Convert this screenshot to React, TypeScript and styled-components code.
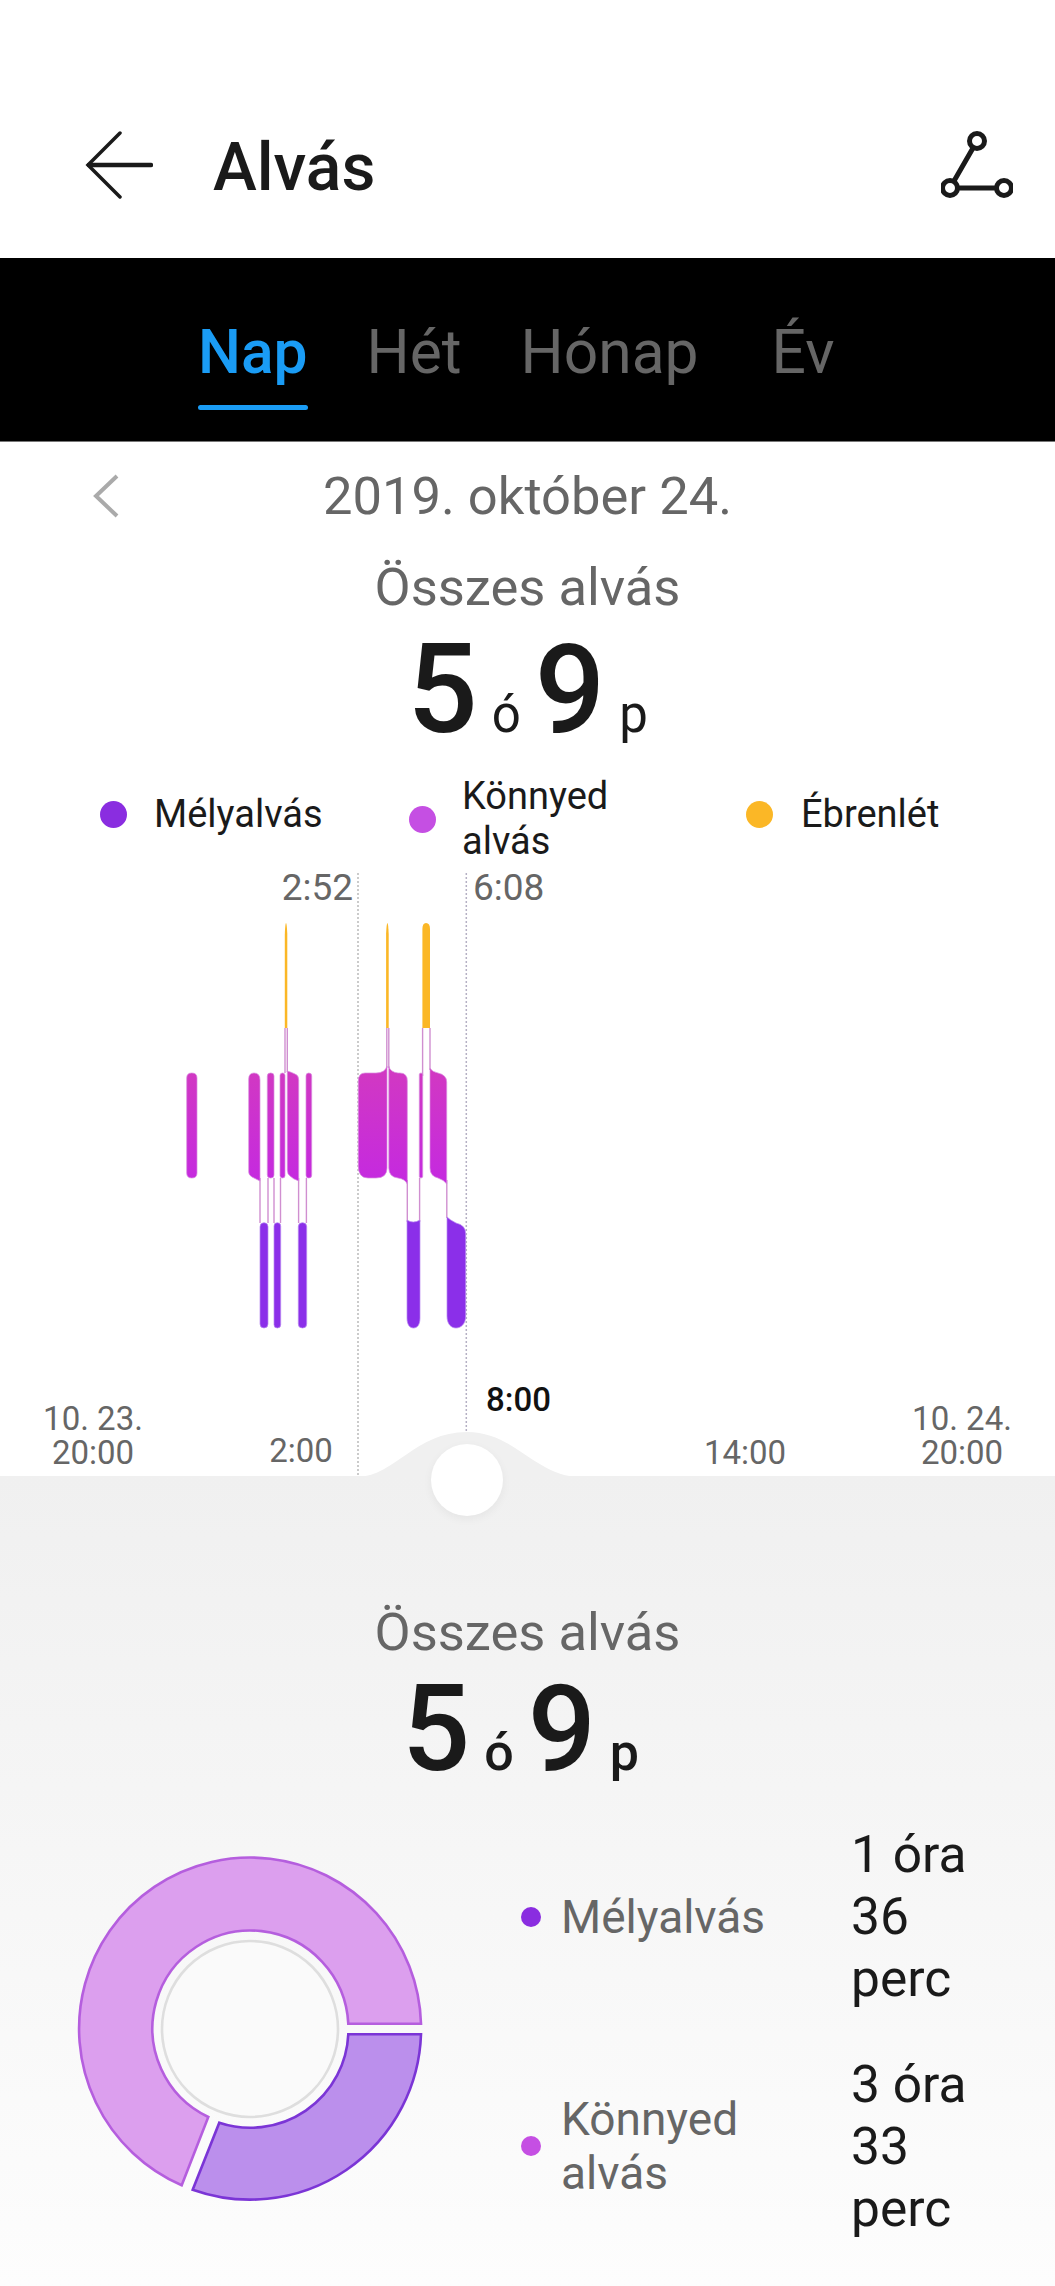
import React from "react";
import styled, { createGlobalStyle } from "styled-components";

const Global = createGlobalStyle`
  html, body { margin: 0; padding: 0; background: #fff; }
  body { font-family: Roboto, "Liberation Sans", sans-serif; }
`;

const Page = styled.div`
  width: 1055px;
  height: 2286px;
  overflow: hidden;
  display: flex;
  flex-direction: column;
  background: #fff;
`;

const Header = styled.header`
  height: 258px;
  box-sizing: border-box;
  padding: 72px 42px 0 85px;
  display: flex;
  align-items: center;
  flex: none;
`;

const Title = styled.h1`
  margin: 6px 0 0 60px;
  flex: 1;
  font-size: 66px;
  font-weight: 500;
  color: #1a1a1a;
  line-height: 1;
`;

const IconBox = styled.svg`
  display: block;
  flex: none;
`;

const TabBar = styled.nav`
  height: 184px;
  flex: none;
  box-sizing: border-box;
  background: #000;
  border-bottom: 1px solid #777;
  padding: 0 0 0 198px;
  display: flex;
  align-items: stretch;
  gap: 59px;
`;

const Tab = styled.div<{ $active?: boolean; $extra?: number }>`
  position: relative;
  margin-left: ${(p) => p.$extra ?? 0}px;
  padding-top: 60px;
  font-size: 60.5px;
  line-height: 70px;
  font-weight: ${(p) => (p.$active ? 500 : 400)};
  color: ${(p) => (p.$active ? "#1a9cf5" : "#666")};
  &::after {
    content: "";
    display: ${(p) => (p.$active ? "block" : "none")};
    position: absolute;
    left: 0;
    right: 0;
    top: 147px;
    height: 5px;
    border-radius: 3px;
    background: #1a9cf5;
  }
`;

const DateRow = styled.div`
  height: 76px;
  margin-top: 16px;
  flex: none;
  display: grid;
  grid-template-columns: 120px 1fr 120px;
  align-items: center;
`;

const DateLabel = styled.div`
  text-align: center;
  font-size: 52.5px;
  line-height: 76px;
  color: #666;
`;

const Heading = styled.div<{ $top: number }>`
  text-align: center;
  font-size: 52.5px;
  line-height: 60px;
  color: #666;
  margin-top: ${(p) => p.$top}px;
  flex: none;
`;

const BigRow = styled.div<{ $gap: number; $top: number; $height: number; $shift?: number }>`
  display: flex;
  justify-content: center;
  align-items: baseline;
  gap: ${(p) => p.$gap}px;
  margin-top: ${(p) => p.$top}px;
  height: ${(p) => p.$height}px;
  padding-right: ${(p) => p.$shift ?? 0}px;
  color: #1a1a1a;
  flex: none;
`;

const BigDigit = styled.span<{ $size: number }>`
  font-size: ${(p) => p.$size}px;
  line-height: 1;
  font-weight: 500;
`;

const Unit = styled.span<{ $strong?: boolean }>`
  font-size: ${(p) => (p.$strong ? 52 : 51)}px;
  line-height: 1;
  font-weight: ${(p) => (p.$strong ? 500 : 400)};
`;

const Legend = styled.div`
  display: grid;
  grid-template-columns: 309px 337px 1fr;
  padding-left: 100px;
  margin-top: 15px;
  height: 96px;
  align-items: center;
  flex: none;
`;

const LegendItem = styled.div<{ $gap: number; $lift?: number }>`
  display: flex;
  align-items: center;
  gap: ${(p) => p.$gap}px;
  margin-bottom: ${(p) => p.$lift ?? 0}px;
  font-size: 38px;
  line-height: 45px;
  color: #1a1a1a;
`;

const Dot = styled.span<{ $color: string; $size: number }>`
  width: ${(p) => p.$size}px;
  height: ${(p) => p.$size}px;
  border-radius: 50%;
  background: ${(p) => p.$color};
  flex: none;
`;

const Chart = styled.div`
  position: relative;
  height: 606px;
  margin-top: 3px;
  flex: none;
`;

const ChartSvg = styled.svg`
  position: absolute;
  left: 0;
  top: 0;
  display: block;
`;

const ChartLabel = styled.div<{ $x: number; $y: number; $strong?: boolean; $align?: string; $size?: number }>`
  position: absolute;
  left: ${(p) => p.$x}px;
  top: ${(p) => p.$y}px;
  transform: translateX(${(p) => (p.$align === "center" ? "-50%" : p.$align === "right" ? "-100%" : "0")});
  font-size: ${(p) => p.$size ?? 33}px;
  line-height: 34px;
  text-align: center;
  white-space: nowrap;
  font-weight: ${(p) => (p.$strong ? 500 : 400)};
  color: ${(p) => (p.$strong ? "#111" : "#666")};
`;

const Knob = styled.div`
  position: absolute;
  left: 431px;
  top: 574px;
  width: 72px;
  height: 72px;
  border-radius: 50%;
  background: #fff;
  box-shadow: 0 3px 10px rgba(0, 0, 0, 0.05);
`;

const Panel = styled.section`
  flex: 1;
  display: flex;
  flex-direction: column;
  background: linear-gradient(#f0f0f0, #fdfdfd);
`;

const DonutRow = styled.div`
  display: grid;
  grid-template-columns: 521px 330px 1fr;
  margin-top: 5px;
`;

const DonutSlot = styled.div`
  padding: 54px 0 0 77px;
`;

const BreakName = styled.div`
  display: flex;
  align-items: center;
  gap: 20px;
  font-size: 46px;
  line-height: 54px;
  color: #666;
`;

const BreakValue = styled.div`
  font-size: 51.5px;
  line-height: 62px;
  color: #1a1a1a;
`;

const BreakCell = styled.div<{ $h: number }>`
  height: ${(p) => p.$h}px;
  display: flex;
  align-items: center;
`;

type Bar = [number, number, number, number, number];
const r = (x1: number, x2: number, y1: number, y2: number, rad: number) => {
  const R = Math.min(rad, (x2 - x1) / 2);
  return `M${x1} ${y1 + R}Q${x1} ${y1} ${x1 + R} ${y1}L${x2 - R} ${y1}Q${x2} ${y1} ${x2} ${y1 + R}L${x2} ${y2 - R}Q${x2} ${y2} ${x2 - R} ${y2}L${x1 + R} ${y2}Q${x1} ${y2} ${x1} ${y2 - R}Z`;
};

const lightBars: Bar[] = [
  [186.7, 197, 1073, 1178, 5],
  [267.3, 274, 1073, 1178, 3],
  [280, 285, 1073, 1178, 3],
  [306, 311.7, 1073, 1178, 3],
  [419.3, 422.7, 1073, 1178, 2],
];

const lightPaths = [
  "M248.7 1079Q248.7 1073 254 1073Q260 1073 260 1080L260 1181Q256 1179 252 1177Q248.7 1175 248.7 1172Z",
  "M287.3 1071Q291 1072 295 1074Q298.7 1075 298.7 1080L298.7 1181Q293 1179 290 1176Q287.3 1174 287.3 1170Z",
  "M358.3 1081Q358.3 1073 365 1073L376 1073Q385 1073 387 1066L387 1168Q387 1178 376 1178L368 1178Q358.3 1178 358.3 1166Z",
  "M388.8 1066Q390 1072 398 1073L400 1073Q407.3 1073 407.3 1081L407.3 1184Q405 1179 398 1178Q388.8 1177 388.8 1168Z",
  "M430 1068Q432 1072 438 1073Q446.7 1075 446.7 1082L446.7 1184Q444 1180 438 1178Q430 1176 430 1168Z",
];

const deepBars: Bar[] = [
  [260, 268, 1222.7, 1328, 4],
  [274, 280.7, 1222.7, 1328, 3.3],
  [298.3, 306.7, 1222.7, 1328, 4],
];

const deepPaths = [
  "M407 1220Q413 1224 420 1220L420 1318C420 1325 417 1328 413.5 1328C410 1328 407 1325 407 1318Z",
  "M447 1217Q450 1220 456 1223Q465.7 1225 465.7 1234L465.7 1316C465.7 1324 461 1328 456 1328C451 1328 447 1324 447 1316Z",
];

const yellowPaths = [
  "M284.8 1028L284.8 934Q285.3 923 286 923Q286.8 923 287.3 934L287.3 1028Z",
  "M386.1 1028L386.1 934Q386.6 923 387.4 923Q388.2 923 388.7 934L388.7 1028Z",
  "M422.4 1028L422.4 929Q422.4 923 426 923Q430 923 430 929L430 1028Z",
];

const connectors: [number, number, number][] = [
  [285, 1028, 1073],
  [287.3, 1028, 1072],
  [386.8, 1028, 1068],
  [388.8, 1028, 1068],
  [422.6, 1028, 1076],
  [430, 1028, 1070],
  [260, 1178, 1223],
  [268, 1178, 1223],
  [274, 1178, 1223],
  [280.5, 1178, 1223],
  [298.6, 1178, 1223],
  [306.4, 1178, 1223],
  [407.3, 1180, 1222],
  [419.6, 1178, 1222],
  [446.8, 1180, 1218],
];

const BackIcon = () => (
  <IconBox width="68" height="68" viewBox="0 0 68 68" fill="none" stroke="#1a1a1a" strokeLinecap="round">
    <path d="M35 2 3 34l32 32" strokeWidth="3.5" />
    <path d="M4 34h62" strokeWidth="4.5" />
  </IconBox>
);

const RouteIcon = () => (
  <IconBox width="72" height="68" viewBox="0 0 72 68" fill="none" stroke="#1a1a1a" strokeWidth="5">
    <circle cx="36" cy="10" r="7.5" />
    <circle cx="9" cy="57" r="7.5" />
    <circle cx="63" cy="57" r="7.5" />
    <path d="M32 17 13 50M17 57h38" />
  </IconBox>
);

const ChevronSvg = styled(IconBox)`
  margin-left: 92px;
`;

const Chevron = () => (
  <ChevronSvg width="28" height="44" viewBox="0 0 28 44" fill="none" stroke="#aaa" strokeWidth="4">
    <path d="M25 2 4 22l21 20" />
  </ChevronSvg>
);

const SleepChart = () => (
  <Chart>
    <ChartSvg width="1055" height="606" viewBox="0 870 1055 606" overflow="visible">
      <defs>
        <linearGradient id="lightGrad" gradientUnits="userSpaceOnUse" x1="0" y1="1073" x2="0" y2="1180">
          <stop offset="0" stopColor="#d138c3" />
          <stop offset="1" stopColor="#c52adf" />
        </linearGradient>
      </defs>
      <path d="M358 873V1476" stroke="#bbb" strokeWidth="1.5" strokeDasharray="2 2" fill="none" />
      <path d="M466.3 873V1432" stroke="#b5b0c4" strokeWidth="1.5" strokeDasharray="2 2" fill="none" />
      {connectors.map(([x, a, b], i) => (
        <path key={i} d={`M${x} ${a}V${b}`} stroke="#d08fd0" strokeWidth="1.4" fill="none" />
      ))}
      {yellowPaths.map((d, i) => (
        <path key={i} d={d} fill="#fbb726" />
      ))}
      {lightBars.map(([a, b, c, d, e], i) => (
        <path key={i} d={r(a, b, c, d, e)} fill="url(#lightGrad)" stroke="#d98ee0" strokeWidth="0.7" />
      ))}
      {lightPaths.map((d, i) => (
        <path key={i} d={d} fill="url(#lightGrad)" stroke="#d98ee0" strokeWidth="0.7" />
      ))}
      {deepBars.map(([a, b, c, d, e], i) => (
        <path key={i} d={r(a, b, c, d, e)} fill="#8b2fe9" stroke="#b98af0" strokeWidth="0.7" />
      ))}
      {deepPaths.map((d, i) => (
        <path key={i} d={d} fill="#8b2fe9" stroke="#b98af0" strokeWidth="0.7" />
      ))}
      <path d="M358 1477C395 1476 415 1432 467 1432C515 1432 535 1476 580 1477Z" fill="#f0f0f0" />
    </ChartSvg>
    <ChartLabel $x={353} $y={1} $align="right" $size={37}>2:52</ChartLabel>
    <ChartLabel $x={473} $y={1} $size={37}>6:08</ChartLabel>
    <ChartLabel $x={486} $y={513} $strong>8:00</ChartLabel>
    <ChartLabel $x={93} $y={532} $align="center">10. 23.<br />20:00</ChartLabel>
    <ChartLabel $x={301} $y={564} $align="center">2:00</ChartLabel>
    <ChartLabel $x={745} $y={566} $align="center">14:00</ChartLabel>
    <ChartLabel $x={962} $y={532} $align="center">10. 24.<br />20:00</ChartLabel>
    <Knob />
  </Chart>
);

const Donut = () => (
  <IconBox width="346" height="346" viewBox="77 1854 346 346">
    <path
      d="M421 2021.7A171 171 0 1 0 181.7 2183.3L208.3 2115A98 98 0 1 1 348.3 2021.7Z"
      fill="#dc9fee"
      stroke="#b55ede"
      strokeWidth="2.6"
    />
    <path
      d="M421 2032.3A171 171 0 0 1 192.7 2187.7L219.3 2120.7A98 98 0 0 0 348.3 2032.3Z"
      fill="#bb8fec"
      stroke="#7b35d6"
      strokeWidth="2.6"
    />
    <circle cx="250" cy="2027" r="88" fill="#fafafa" stroke="#dedede" strokeWidth="2.6" />
  </IconBox>
);

export default function App() {
  return (
    <Page>
      <Global />
      <Header>
        <BackIcon />
        <Title>Alvás</Title>
        <RouteIcon />
      </Header>
      <TabBar>
        <Tab $active>Nap</Tab>
        <Tab>Hét</Tab>
        <Tab>Hónap</Tab>
        <Tab $extra={14}>Év</Tab>
      </TabBar>
      <DateRow>
        <Chevron />
        <DateLabel>2019. október 24.</DateLabel>
      </DateRow>
      <Heading $top={23}>Összes alvás</Heading>
      <BigRow $gap={14} $top={11} $height={128}>
        <BigDigit $size={124}>5</BigDigit>
        <Unit>ó</Unit>
        <BigDigit $size={124}>9</BigDigit>
        <Unit>p</Unit>
      </BigRow>
      <Legend>
        <LegendItem $gap={27} $lift={10}><Dot $color="#8a2de0" $size={27} />Mélyalvás</LegendItem>
        <LegendItem $gap={26}><Dot $color="#c54fe3" $size={27} /><span>Könnyed<br />alvás</span></LegendItem>
        <LegendItem $gap={28} $lift={10}><Dot $color="#fbb726" $size={27} />Ébrenlét</LegendItem>
      </Legend>
      <SleepChart />
      <Panel>
        <Heading $top={126}>Összes alvás</Heading>
        <BigRow $gap={14} $top={7} $height={128} $shift={14}>
          <BigDigit $size={120}>5</BigDigit>
          <Unit $strong>ó</Unit>
          <BigDigit $size={120}>9</BigDigit>
          <Unit $strong>p</Unit>
        </BigRow>
        <DonutRow>
          <DonutSlot><Donut /></DonutSlot>
          <div>
            <BreakCell $h={229}><BreakName><Dot $color="#8a2de0" $size={20} />Mélyalvás</BreakName></BreakCell>
            <BreakCell $h={229}><BreakName><Dot $color="#c54fe3" $size={20} /><span>Könnyed<br />alvás</span></BreakName></BreakCell>
          </div>
          <div>
            <BreakCell $h={230}><BreakValue>1 óra<br />36<br />perc</BreakValue></BreakCell>
            <BreakCell $h={230}><BreakValue>3 óra<br />33<br />perc</BreakValue></BreakCell>
          </div>
        </DonutRow>
      </Panel>
    </Page>
  );
}
